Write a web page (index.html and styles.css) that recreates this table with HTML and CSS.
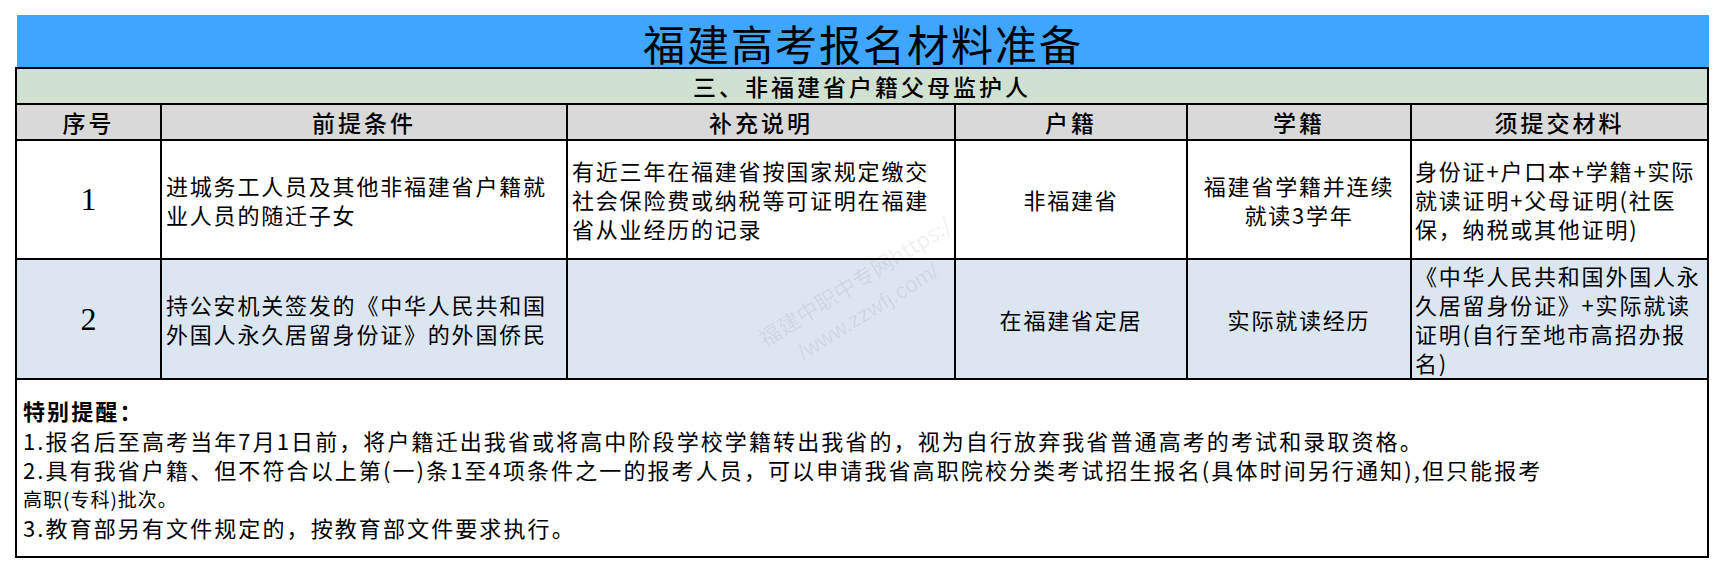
FILE: index.html
```html
<!DOCTYPE html>
<html lang="zh-CN">
<head>
<meta charset="utf-8">
<title>福建高考报名材料准备</title>
<link rel="stylesheet" href="styles.css">
</head>
<body>
<div class="sheet">
  <div class="title">福建高考报名材料准备</div>
  <div class="grid">
    <div class="section">三、非福建省户籍父母监护人</div>

    <div class="th">序号</div>
    <div class="th">前提条件</div>
    <div class="th">补充说明</div>
    <div class="th">户籍</div>
    <div class="th">学籍</div>
    <div class="th">须提交材料</div>

    <div class="td num">1</div>
    <div class="td l">进城务工人员及其他非福建省户籍就<br>业人员的随迁子女</div>
    <div class="td l">有近三年在福建省按国家规定缴交<br>社会保险费或纳税等可证明在福建<br>省从业经历的记录</div>
    <div class="td c">非福建省</div>
    <div class="td c">福建省学籍并连续<br>就读3学年</div>
    <div class="td l3">身份证+户口本+学籍+实际<br>就读证明+父母证明(社医<br>保，纳税或其他证明)</div>

    <div class="td alt num">2</div>
    <div class="td alt l">持公安机关签发的《中华人民共和国<br>外国人永久居留身份证》的外国侨民</div>
    <div class="td alt l"></div>
    <div class="td alt c">在福建省定居</div>
    <div class="td alt c">实际就读经历</div>
    <div class="td alt l3">《中华人民共和国外国人永<br>久居留身份证》+实际就读<br>证明(自行至地市高招办报<br>名)</div>

    <div class="notes">
      <div class="head">特别提醒：</div>
      <div>1.报名后至高考当年7月1日前，将户籍迁出我省或将高中阶段学校学籍转出我省的，视为自行放弃我省普通高考的考试和录取资格。</div>
      <div>2.具有我省户籍、但不符合以上第(一)条1至4项条件之一的报考人员，可以申请我省高职院校分类考试招生报名(具体时间另行通知),但只能报考</div>
      <div class="small">高职(专科)批次。</div>
      <div>3.教育部另有文件规定的，按教育部文件要求执行。</div>
    </div>
  </div>
  <div class="watermark">
    <span class="wm1">福建中职中专网https:/</span>
    <span class="wm2">/www.zzwfj.com/</span>
  </div>
</div>
</body>
</html>
```

FILE: styles.css
```css
body {
  margin: 0;
  background: #ffffff;
  color: #000000;
  font-family: "Noto Sans CJK SC", "Noto Sans", sans-serif;
}

.sheet {
  position: relative;
  width: 1694px;
  margin: 15px 0 0 15px;
}

.title {
  margin-left: 2px;
  height: 52px;
  padding-top: 3px;
  box-sizing: border-box;
  background: #3ea6fe;
  display: flex;
  align-items: center;
  justify-content: center;
  font-size: 42px;
  letter-spacing: 2px;
  line-height: 44px;
}

.grid {
  display: grid;
  grid-template-columns: 143px 404px 386px 230px 222px 295px;
  grid-template-rows: 34px 34px 117px 118px 176px;
  gap: 2px;
  padding: 2px;
  background: #000000;
}

.section {
  grid-column: 1 / -1;
  background: #d0e1d1;
  display: flex;
  align-items: center;
  justify-content: center;
  font-size: 23px;
  letter-spacing: 3px;
  font-weight: 500;
}

.th {
  background: #d9d9d9;
  display: flex;
  align-items: center;
  justify-content: center;
  font-size: 23px;
  letter-spacing: 3px;
  font-weight: 500;
}

.td {
  background: #ffffff;
  display: flex;
  align-items: center;
  font-size: 22px;
  letter-spacing: 1.8px;
  line-height: 29px;
}

.td.alt {
  background: #dce6f1;
}

.td.l {
  padding-left: 4px;
}

.td.l3 {
  padding-left: 3px;
}

.td.c {
  justify-content: center;
  text-align: center;
}

.td.num {
  justify-content: center;
  font-family: "Liberation Serif", serif;
  font-size: 32px;
  letter-spacing: 0;
}

.notes {
  grid-column: 1 / -1;
  background: #ffffff;
  padding: 14px 6px 0 6px;
  font-size: 22px;
  letter-spacing: 2.1px;
  line-height: 29px;
}

.notes .head {
  font-weight: 700;
  line-height: 32px;
}

.notes .small {
  font-size: 19px;
  letter-spacing: 1px;
}

.watermark {
  position: absolute;
  left: 848px;
  top: 280px;
  transform: translate(-50%, -50%) rotate(-32deg);
  display: flex;
  flex-direction: column;
  font-family: "Liberation Sans", "Noto Sans CJK SC", sans-serif;
  font-size: 22px;
  line-height: 34px;
  color: rgba(0, 0, 0, 0.07);
  white-space: nowrap;
  pointer-events: none;
}

.watermark .wm1 {
  font-family: "Noto Sans CJK SC", sans-serif;
}

.watermark .wm2 {
  padding-left: 26px;
}
```
